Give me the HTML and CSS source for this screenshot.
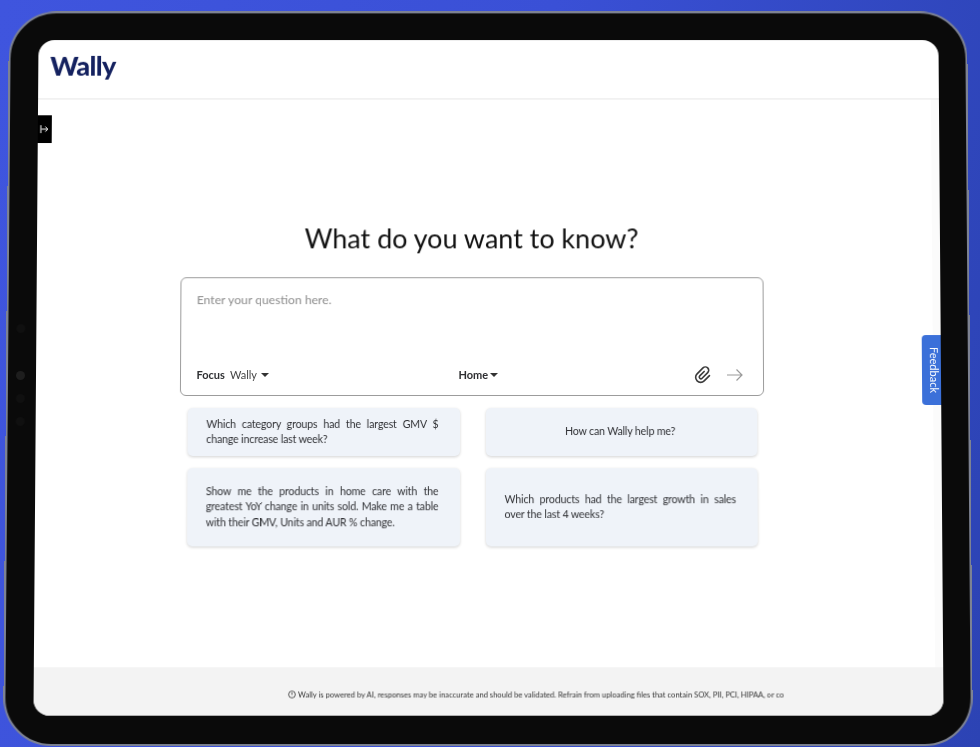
FILE: index.html
```html
<!DOCTYPE html>
<html lang="en">
<head>
  <meta charset="UTF-8">
  <title>Wally</title>
  <link rel="stylesheet" href="styles.css">
</head>
<body>

<div class="tablet">
  <div class="side-dots"><i></i><i class="lit"></i><i></i><i></i></div>

  <div class="screen">
    <header class="topbar">
      <div class="logo">Wally</div>
    </header>

    <button class="side-toggle" aria-label="Open sidebar">
      <svg width="10" height="10" viewBox="0 0 10 10" fill="none" stroke="#fff" stroke-width="1">
        <path d="M1 1v8M1.500 5h6.500M5.500 2.500 8 5 5.500 7.500"/>
      </svg>
    </button>

    <a class="feedback" href="#">Feedback</a>

    <main class="content">
      <h1>What do you want to know?</h1>

      <div class="ask-box">
        <div class="placeholder">Enter your question here.</div>
        <div class="ask-tools">
          <div class="tool-focus"><b>Focus</b><span>Wally</span><i class="caret"></i></div>
          <div class="tool-home"><b>Home</b><i class="caret"></i></div>
          <div class="tool-icons">
            <svg width="20" height="20" viewBox="0 0 24 24" fill="none" stroke="#3a3a3a" stroke-width="1.900" stroke-linecap="round" stroke-linejoin="round">
              <path transform="rotate(45 12 12)" d="M10 8v7.500a2 2 0 0 0 4 0V6a4 4 0 0 0-8 0v10a6 6 0 0 0 12 0V7"/>
            </svg>
            <svg width="18" height="14" viewBox="0 0 18 14" fill="none" stroke="#9a9a9a" stroke-width="1.200">
              <path d="M1 7h15M10.500 1.500 16 7l-5.500 5.500"/>
            </svg>
          </div>
        </div>
      </div>

      <div class="prompts">
        <div class="prompt">Which category groups had the largest GMV $ change increase last week?</div>
        <div class="prompt center">How can Wally help me?</div>
        <div class="prompt">Show me the products in home care with the greatest YoY change in units sold. Make me a table with their GMV, Units and AUR % change.</div>
        <div class="prompt">Which products had the largest growth in sales over the last 4 weeks?</div>
      </div>
    </main>

    <footer class="disclaimer">
      <svg width="8" height="8" viewBox="0 0 10 10" fill="none" stroke="#333" stroke-width="1">
        <circle cx="5" cy="5" r="4.200"/><path d="M5 2.500v3"/>
      </svg>
      <span>Wally is powered by AI, responses may be inaccurate and should be validated. Refrain from uploading files that contain SOX, PII, PCI, HIPAA, or co</span>
    </footer>
  </div>
</div>

</body>
</html>
```

FILE: styles.css
```css
html, body {
  height: 747px;
  margin: 0;
  overflow: hidden;
}
body {
  font-family: "Lato", "Noto Sans", sans-serif;
  background: linear-gradient(100deg, #3f55de 0%, #3a50d6 50%, #2c43b4 100%);
  color: #2e2f32;
}

.tablet {
  position: relative;
  box-sizing: border-box;
  width: 964px;
  height: 735px;
  margin: 9px 0 0 6px;
  padding: 27px 27px 28px 28px;
  background: #0a0a0a;
  border: 2px solid #7d8292;
  border-radius: 48px;
  transform: perspective(2000px) rotateX(1.9deg);
}
.side-dots {
  position: absolute;
  left: 8px;
  top: 313px;
  display: flex;
  flex-direction: column;
  gap: 14px;
}
.side-dots i {
  display: block;
  width: 9px;
  height: 9px;
  border-radius: 50%;
  background: #101010;
}
.side-dots i:first-child {
  margin-bottom: 24px;
}
.side-dots i.lit {
  background: #1e1e1e;
}

.screen {
  position: relative;
  display: flex;
  flex-direction: column;
  height: 100%;
  background: #fff;
  border-radius: 16px;
  overflow: hidden;
}

.topbar {
  flex: none;
  display: flex;
  align-items: center;
  height: 59px;
  padding-left: 12px;
  border-bottom: 1px solid #e6e6e6;
}
.logo {
  color: #14215f;
  font-size: 27px;
  font-weight: 900;
  letter-spacing: -0.6px;
  margin-top: -9px;
}

.side-toggle {
  position: absolute;
  left: 0;
  top: 76px;
  width: 14px;
  height: 28px;
  padding: 0;
  border: 0;
  background: #000;
  display: flex;
  align-items: center;
  justify-content: center;
}

.feedback {
  position: absolute;
  right: 0;
  top: 297px;
  box-sizing: border-box;
  width: 19px;
  height: 70px;
  padding-left: 5px;
  display: flex;
  align-items: center;
  justify-content: center;
  background: #3b70d9;
  border-radius: 4px 0 0 4px;
  color: #fff;
  font-size: 11px;
  text-decoration: none;
  writing-mode: vertical-rl;
}

.content {
  flex: 1;
  display: flex;
  flex-direction: column;
  align-items: center;
  padding: 122px 26px 0 0;
  border-right: 8px solid #fbfbfb;
}
h1 {
  margin: 0 0 21px;
  font-size: 27px;
  font-weight: 400;
  line-height: 36px;
  color: #111;
}

.ask-box {
  box-sizing: border-box;
  display: flex;
  flex-direction: column;
  justify-content: space-between;
  width: 584px;
  height: 119px;
  padding: 13px 16px 10px;
  border: 1px solid #9c9c9c;
  border-radius: 6px;
}
.placeholder {
  font-size: 12.200px;
  line-height: 18px;
  color: #8c8c8c;
}
.ask-tools {
  display: flex;
  align-items: center;
  font-size: 11px;
  line-height: 20px;
}
.ask-tools b {
  font-weight: 700;
}
.tool-focus {
  display: flex;
  align-items: center;
  width: 263px;
}
.tool-focus span {
  margin-left: 5px;
  color: #444;
}
.caret {
  width: 0;
  height: 0;
  margin-left: 5px;
  border-left: 4px solid transparent;
  border-right: 4px solid transparent;
  border-top: 4px solid #333;
}
.tool-focus .caret {
  margin-left: 4px;
}
.tool-home {
  display: flex;
  align-items: center;
  margin-left: -1px;
}
.tool-home .caret {
  margin-left: 2px;
}
.tool-icons {
  display: flex;
  align-items: center;
  gap: 13px;
  margin-left: auto;
  margin-right: 3px;
}

.prompts {
  display: grid;
  grid-template-columns: 272px 271px;
  grid-template-rows: 48px 78px;
  gap: 12px 26px;
  margin: 12px 0 0 1px;
}
.prompt {
  display: flex;
  align-items: center;
  box-sizing: border-box;
  padding: 0 21px 0 19px;
  background: #eff3f9;
  border-radius: 5px;
  box-shadow: 0 1px 3px rgba(0, 0, 0, 0.18);
  font-size: 10.600px;
  letter-spacing: -0.150px;
  line-height: 15.500px;
  text-align: justify;
  color: #2f3034;
}
.prompt.center {
  justify-content: center;
  text-align: center;
}

.disclaimer {
  flex: none;
  display: flex;
  align-items: center;
  gap: 2px;
  height: 48px;
  padding: 6px 0 0 253px;
  box-sizing: border-box;
  background: #f3f3f3;
  font-size: 7.600px;
  white-space: nowrap;
  color: #333;
}
```
